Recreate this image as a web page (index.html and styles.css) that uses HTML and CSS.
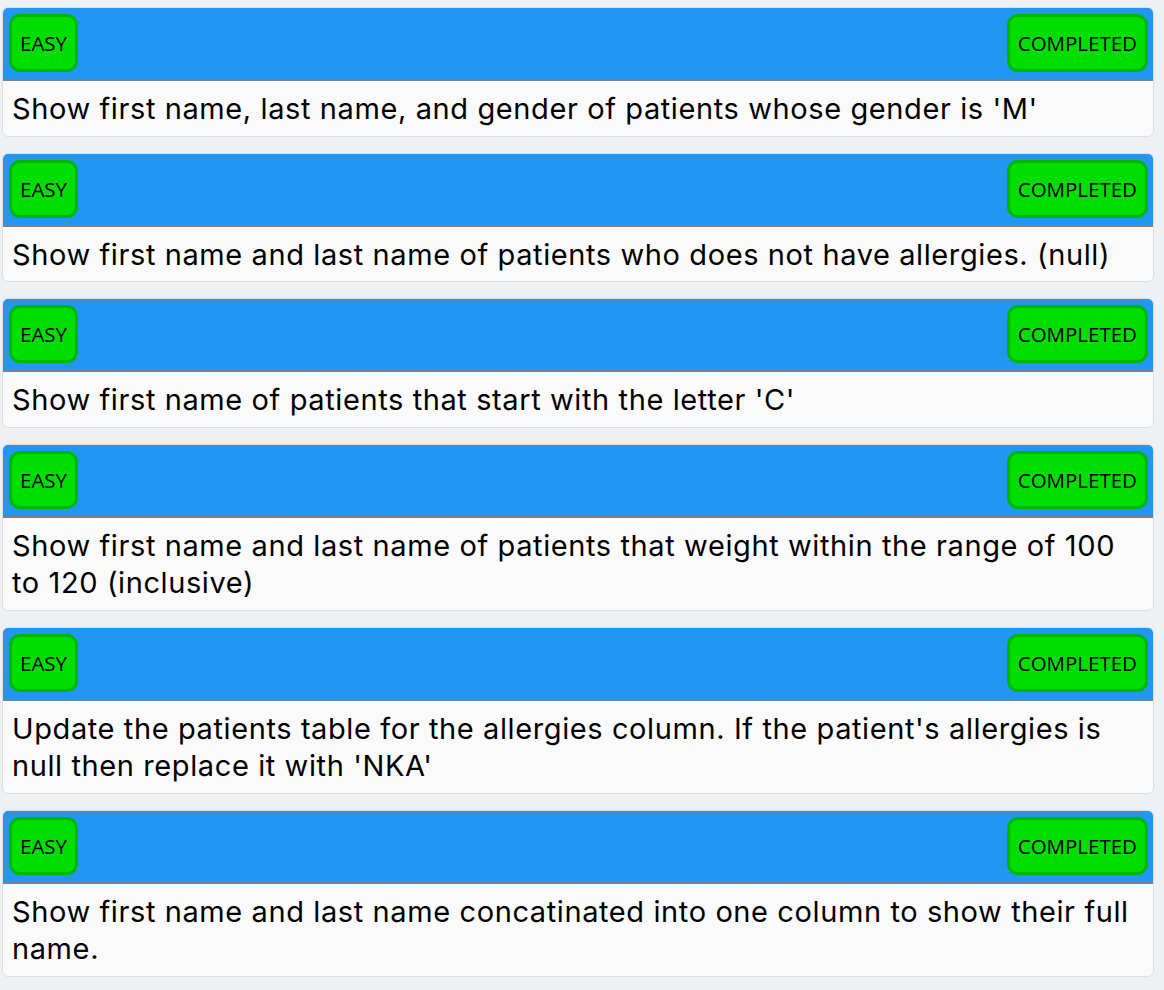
FILE: index.html
```html
<!DOCTYPE html>
<html lang="en">
<head>
<meta charset="utf-8">
<title>Questions</title>
<link rel="stylesheet" href="styles.css">
</head>
<body>
<div class="list">
  <div class="card">
    <div class="card-head"><span class="badge">EASY</span><span class="badge">COMPLETED</span></div>
    <div class="card-body">Show first name, last name, and gender of patients whose gender is 'M'</div>
  </div>
  <div class="card">
    <div class="card-head"><span class="badge">EASY</span><span class="badge">COMPLETED</span></div>
    <div class="card-body">Show first name and last name of patients who does not have allergies. (null)</div>
  </div>
  <div class="card">
    <div class="card-head"><span class="badge">EASY</span><span class="badge">COMPLETED</span></div>
    <div class="card-body">Show first name of patients that start with the letter 'C'</div>
  </div>
  <div class="card">
    <div class="card-head"><span class="badge">EASY</span><span class="badge">COMPLETED</span></div>
    <div class="card-body">Show first name and last name of patients that weight within the range of 100 to 120 (inclusive)</div>
  </div>
  <div class="card">
    <div class="card-head"><span class="badge">EASY</span><span class="badge">COMPLETED</span></div>
    <div class="card-body">Update the patients table for the allergies column. If the patient's allergies is null then replace it with 'NKA'</div>
  </div>
  <div class="card">
    <div class="card-head"><span class="badge">EASY</span><span class="badge">COMPLETED</span></div>
    <div class="card-body">Show first name and last name concatinated into one column to show their full name.</div>
  </div>
</div>
</body>
</html>
```

FILE: styles.css
```css
html, body {
  margin: 0;
  padding: 0;
  background: #eef1f4;
}

.list {
  display: flex;
  flex-direction: column;
  gap: 16px;
  padding: 7px 10px 0 2px;
}

.card {
  background: #fafafa;
  border: 1px solid #dedede;
  border-radius: 6px;
  overflow: hidden;
}

.card-head {
  display: flex;
  justify-content: space-between;
  align-items: center;
  height: 73px;
  box-sizing: border-box;
  padding: 6px 5px 7px 6px;
  background: #2196f3;
  border-bottom: 2px solid #808080;
}

.badge {
  display: flex;
  align-items: center;
  height: 58px;
  box-sizing: border-box;
  padding: 0 8px;
  background: #00dd00;
  border: 3px solid #00b700;
  border-radius: 11px;
  font-family: "Open Sans", "Noto Sans", sans-serif;
  font-size: 20.5px;
  color: #000;
}

.card-body {
  padding: 9px 10px 8px 9px;
  font-family: Inter, "Liberation Sans", Arial, sans-serif;
  font-size: 29px;
  line-height: 37.5px;
  letter-spacing: 0.6px;
  color: #000;
}
```
